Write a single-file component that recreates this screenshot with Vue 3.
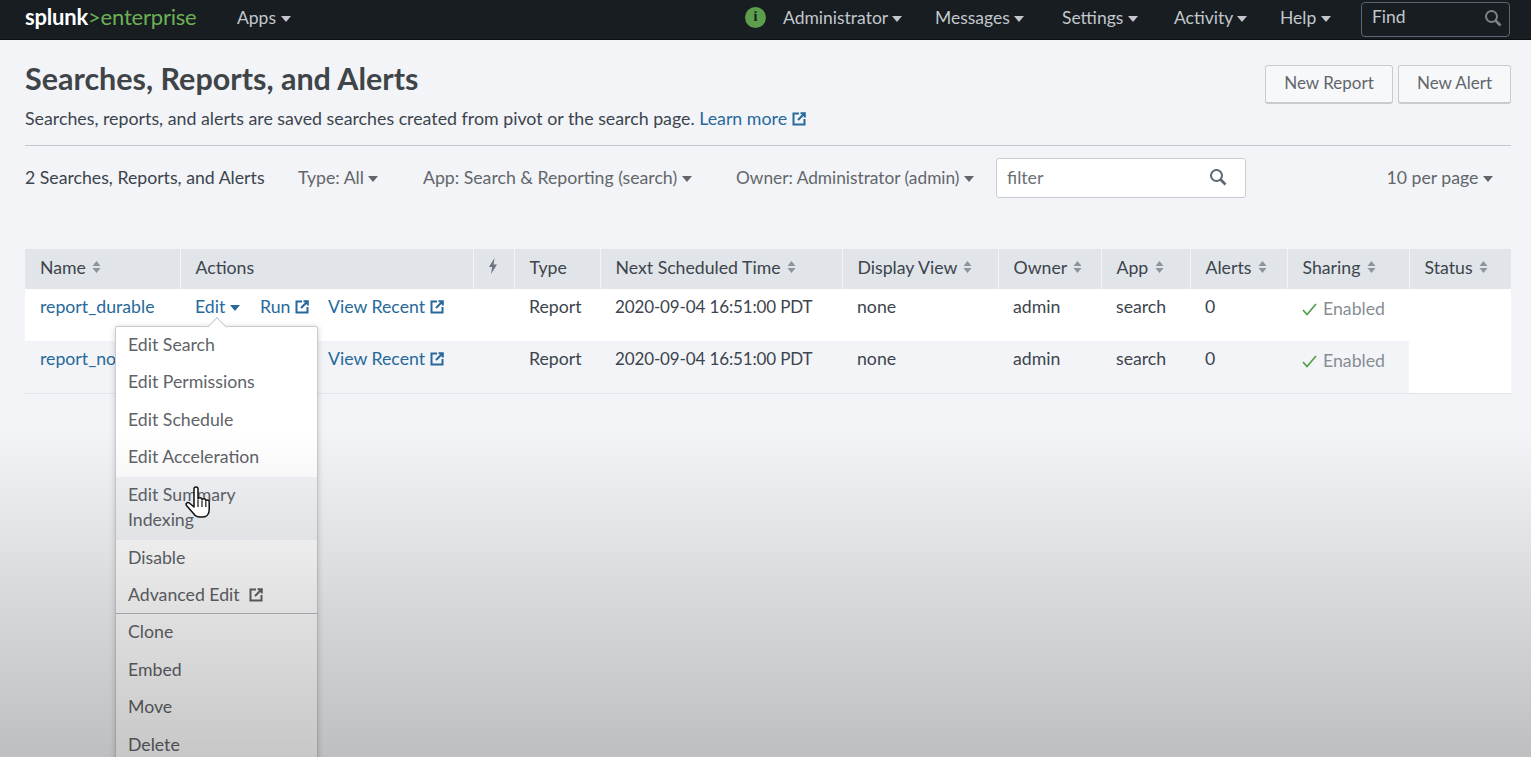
<template>
  <div class="page">
    <header class="topbar">
      <div class="logo"><span class="logo-white">splunk</span><span class="logo-green">&gt;enterprise</span></div>
      <a class="nav-item apps">Apps <i class="caret"></i></a>
      <div class="nav-right">
        <span class="info">i</span>
        <a v-for="item in navItems" :key="item" class="nav-item">{{ item }} <i class="caret"></i></a>
        <div class="find">
          <span>Find</span>
          <svg width="18" height="18" viewBox="0 0 18 18" fill="none" stroke="#7d8288" stroke-width="2"><circle cx="7.5" cy="7.5" r="5.5" /><path d="M11.5 11.5l5 5" stroke-width="2.6" /></svg>
        </div>
      </div>
    </header>

    <main class="content">
      <section class="title-row">
        <div>
          <h1>Searches, Reports, and Alerts</h1>
          <p>Searches, reports, and alerts are saved searches created from pivot or the search page. <a class="link">Learn more <svg class="ext" viewBox="0 0 14 14"><path d="M7 1.500H1.500v11h11V7M6 8l6.500-6.500M8.500 1.200h4.300v4.300" /></svg></a></p>
        </div>
        <div class="buttons">
          <button>New Report</button>
          <button>New Alert</button>
        </div>
      </section>

      <section class="filters">
        <span class="count">2 Searches, Reports, and Alerts</span>
        <span class="drop type">Type: All <i class="caret"></i></span>
        <span class="drop app">App: Search &amp; Reporting (search) <i class="caret"></i></span>
        <span class="drop owner">Owner: Administrator (admin) <i class="caret"></i></span>
        <div class="filter-box">
          <span>filter</span>
          <svg width="18" height="18" viewBox="0 0 18 18" fill="none" stroke="#5c6773" stroke-width="2"><circle cx="7.500" cy="7.500" r="5.500" /><path d="M11.500 11.500l5 5" stroke-width="2.600" /></svg>
        </div>
        <span class="drop per-page">10 per page <i class="caret"></i></span>
      </section>

      <table class="reports">
        <colgroup>
          <col v-for="w in colWidths" :key="w.id" :style="{ width: w.px + 'px' }" />
        </colgroup>
        <thead>
          <tr>
            <th v-for="col in columns" :key="col.label" :class="{ bolt: col.bolt }">
              <svg v-if="col.bolt" width="10" height="16" viewBox="0 0 10 16"><path d="M6.500 0L1 9h3.200L3 16l6-9.500H5.500z" fill="#6b7280" /></svg>
              <template v-else>
                {{ col.label }}
                <svg v-if="col.sort" class="sort" width="9" height="14" viewBox="0 0 9 14"><path d="M4.500 1L8.500 6H.5zM4.500 13L.5 8h8z" fill="#8c949c" /></svg>
              </template>
            </th>
          </tr>
        </thead>
        <tbody>
          <tr v-for="(row, i) in rows" :key="row.name" :class="{ alt: i === 1 }">
            <td class="link-cell">{{ row.name }}</td>
            <td class="actions-cell">
              <!-- second row's Edit and Run sit behind the open menu -->
              <span class="slot-edit"><a v-if="i === 0" class="link">Edit <i class="caret blue"></i></a></span>
              <span class="slot-run"><a v-if="i === 0" class="link">Run <svg class="ext" viewBox="0 0 14 14"><path d="M7 1.500H1.500v11h11V7M6 8l6.500-6.500M8.500 1.200h4.300v4.300" /></svg></a></span>
              <a class="link">View Recent <svg class="ext" viewBox="0 0 14 14"><path d="M7 1.500H1.500v11h11V7M6 8l6.500-6.500M8.500 1.200h4.300v4.300" /></svg></a>
            </td>
            <td></td>
            <td>Report</td>
            <td class="time">2020-09-04 16:51:00 PDT</td>
            <td>none</td>
            <td>admin</td>
            <td>search</td>
            <td>0</td>
            <td class="sharing">
              <svg width="15" height="13" viewBox="0 0 15 13" fill="none" stroke="#55a04c" stroke-width="1.800"><path d="M1 7l4 4.500L14 1" /></svg>
              <span>Enabled</span>
            </td>
            <td v-if="i === 0" rowspan="2" class="status"></td>
          </tr>
        </tbody>
      </table>
    </main>

    <div class="menu">
      <span class="notch"></span>
      <div class="menu-group first">
        <a v-for="item in menuTop" :key="item" class="menu-item" :class="{ hover: item === 'Edit Summary Indexing' }">{{ item }}</a>
        <a class="menu-item">Advanced Edit <svg class="ext grey" viewBox="0 0 14 14"><path d="M7 1.500H1.500v11h11V7M6 8l6.500-6.500M8.500 1.200h4.300v4.300" /></svg></a>
      </div>
      <div class="menu-group second">
        <a v-for="item in menuBottom" :key="item" class="menu-item">{{ item }}</a>
      </div>
    </div>

    <div class="shade"></div>

    <svg class="hand" width="26" height="34" viewBox="0 0 26 34">
      <path d="M9 3c0-2.600 4-2.600 4 0v10c.3-1.800 3.700-1.800 4 0v1c.3-1.800 3.500-1.800 3.800 0v1c.3-1.500 3.400-1.500 3.400 .5v8c0 4.500-2.500 7.500-6.500 7.500h-3c-3 0-4.700-1.300-6.200-3.500L1.500 19.500c-1.300-2.300 1.500-3.800 3.200-2.200L9 21z" fill="#fff" stroke="#111" stroke-width="1.500" stroke-linejoin="round" />
      <path d="M13 14v7M17 15v6M20.800 16v5" stroke="#111" stroke-width="1.200" fill="none" />
    </svg>
  </div>
</template>

<script setup>
const navItems = ['Administrator', 'Messages', 'Settings', 'Activity', 'Help']

const columns = [
  { label: 'Name', sort: true },
  { label: 'Actions' },
  { label: 'bolt', bolt: true },
  { label: 'Type' },
  { label: 'Next Scheduled Time', sort: true },
  { label: 'Display View', sort: true },
  { label: 'Owner', sort: true },
  { label: 'App', sort: true },
  { label: 'Alerts', sort: true },
  { label: 'Sharing', sort: true },
  { label: 'Status', sort: true }
]

const colWidths = [155, 293, 41, 86, 242, 156, 103, 89, 97, 122, 102].map((px, id) => ({ id, px }))

const rows = [{ name: 'report_durable' }, { name: 'report_no' }]

const menuTop = ['Edit Search', 'Edit Permissions', 'Edit Schedule', 'Edit Acceleration', 'Edit Summary Indexing', 'Disable']
const menuBottom = ['Clone', 'Embed', 'Move', 'Delete']
</script>

<style>
html, body { margin: 0; height: 757px; overflow: hidden; }
</style>

<style scoped>
.page {
  position: relative;
  height: 757px;
  overflow: hidden;
  background: #f2f4f7;
  color: #3c444d;
  font-family: Lato, "Liberation Sans", sans-serif;
  font-size: 17.7px;
}
.topbar {
  background: #171d21;
  border-bottom: 1px solid #0c0f11;
  display: flex;
  align-items: center;
  padding: 0 21px 5px 25px;
  box-sizing: border-box;
  height: 40px;
  color: #c3c7cc;
  font-size: 17.5px;
}
.logo { font-size: 22px; letter-spacing: -0.2px; width: 212px; margin-top: -1px; }
.logo-white { color: #fff; font-weight: 700; }
.logo-green { color: #6cb055; }
.nav-item { white-space: nowrap; }
.nav-right {
  margin-left: auto;
  display: grid;
  grid-template-columns: 38px 152px 127px 112px 106px 81px 149px;
  align-items: center;
}
.info {
  width: 21px; height: 21px; border-radius: 50%;
  background: #5c9e4c; color: #171d21;
  font: 700 14px "Liberation Serif", serif;
  display: flex; align-items: center; justify-content: center;
}
.caret {
  display: inline-block;
  width: 0; height: 0;
  border-left: 5px solid transparent;
  border-right: 5px solid transparent;
  border-top: 6px solid currentColor;
  vertical-align: 2px;
}
.find {
  height: 35px;
  border: 1px solid #5c6773;
  border-radius: 4px;
  box-sizing: border-box;
  display: flex; align-items: center; justify-content: space-between;
  padding: 0 7px 7px 10px;
  margin-top: 5px;
}
.find svg { margin-top: 3px; }
.content { padding: 0 20px 0 25px; }
.title-row {
  display: flex;
  justify-content: space-between;
  border-bottom: 1px solid #c3c8cd;
  height: 106px;
  box-sizing: border-box;
}
h1 { margin: 20px 0 0; font-size: 30.500px; line-height: 37px; font-weight: 700; color: #3f4448; }
.title-row p { margin: 10px 0 0; line-height: 22px; color: #3c444d; font-size: 17.800px; }
.link { color: #27699a; white-space: nowrap; }
.ext { width: 14px; height: 14px; fill: none; stroke: currentColor; stroke-width: 2; vertical-align: -1px; }
.ext.grey { stroke: #5f6368; margin-left: 5px; }
.buttons { display: flex; gap: 5px; margin-top: 25px; align-items: flex-start; }
button {
  height: 39px;
  background: #f7f8fa;
  border: 1px solid #c8ccd1;
  border-bottom-width: 2px;
  border-radius: 3px;
  padding: 0 17px 3px;
  font: inherit;
  font-size: 17px;
  color: #62666b;
  width: 113px;
}
button:first-child { width: 128px; }
.filters {
  display: flex;
  align-items: center;
  height: 40px;
  margin-top: 12px;
  color: #62666b;
}
.filters > span { position: relative; top: -1px; white-space: nowrap; }
.count { color: #3c444d; width: 273px; }
.type { width: 125px; }
.app { width: 313px; }
.owner { width: 260px; font-size: 17.300px; }
.filter-box {
  width: 250px; height: 40px;
  background: #fff;
  border: 1px solid #c8ccd1;
  border-radius: 3px;
  box-sizing: border-box;
  display: flex; align-items: center; justify-content: space-between;
  padding: 0 18px 2px 10px;
  color: #6b6f74;
}
.per-page { margin-left: auto; margin-right: 18px; }
.reports {
  table-layout: fixed;
  border-collapse: collapse;
  width: 1486px;
  margin-top: 51px;
  background: #fff;
  border-bottom: 1px solid #e1e4e8;
}
th {
  height: 40px;
  box-sizing: border-box;
  padding: 0 0 4px 15px;
  background: #e1e4e8;
  border-right: 1px solid #f2f4f7;
  text-align: left;
  font-weight: 400;
  color: #3c444d;
  white-space: nowrap;
}
th:last-child { border-right: 0; }
th.bolt { padding-left: 14px; }
.sort { margin-left: 2px; vertical-align: 0; }
td {
  height: 52px;
  box-sizing: border-box;
  padding: 7px 0 0 15px;
  vertical-align: top;
  line-height: 22px;
  white-space: nowrap;
}
tr.alt td { background: #f2f4f7; }
tr td.status { background: #fff; }
.link-cell { color: #27699a; }
.slot-edit { display: inline-block; width: 65px; }
.slot-run { display: inline-block; width: 68px; }
td.time { font-size: 17px; letter-spacing: -0.13px; }
.sharing { padding-top: 9px; color: #878d94; }
.sharing svg { margin-right: 6px; vertical-align: -1px; }
.caret.blue { color: #27699a; }
.menu {
  position: absolute;
  left: 115px;
  top: 326px;
  width: 203px;
  box-sizing: border-box;
  padding-bottom: 30px;
  background: #fff;
  border: 1px solid #c8ccd1;
  border-radius: 2px;
  box-shadow: 0 1px 6px rgba(0, 0, 0, .18);
  color: #5f6368;
}
.notch {
  position: absolute;
  left: 94px; top: -7px;
  width: 13px; height: 13px;
  background: #fff;
  border-left: 1px solid #c8ccd1;
  border-top: 1px solid #c8ccd1;
  transform: rotate(45deg);
}
.menu-group { position: relative; }
.menu-group.first { margin-top: -1.750px; }
.menu-group.second { border-top: 1px solid #b5bbc2; margin-top: -0.500px; }
.menu-item {
  display: block;
  padding: 6.250px 30px 6.250px 12px;
  line-height: 25px;
}
.second .menu-item:first-child { padding-top: 5.250px; }
.menu-item.hover {
  background: #f2f4f7;
  margin-top: 1.750px;
  padding-top: 4.500px;
  padding-bottom: 8.500px;
}
.menu-item.hover + .menu-item { margin-top: -1.500px; }
.shade {
  position: absolute;
  left: 0; right: 0; top: 430px; bottom: 0;
  background: linear-gradient(to bottom, rgba(0, 0, 0, 0), rgba(0, 0, 0, .22));
  pointer-events: none;
}
.hand { position: absolute; left: 185px; top: 486px; }
</style>
